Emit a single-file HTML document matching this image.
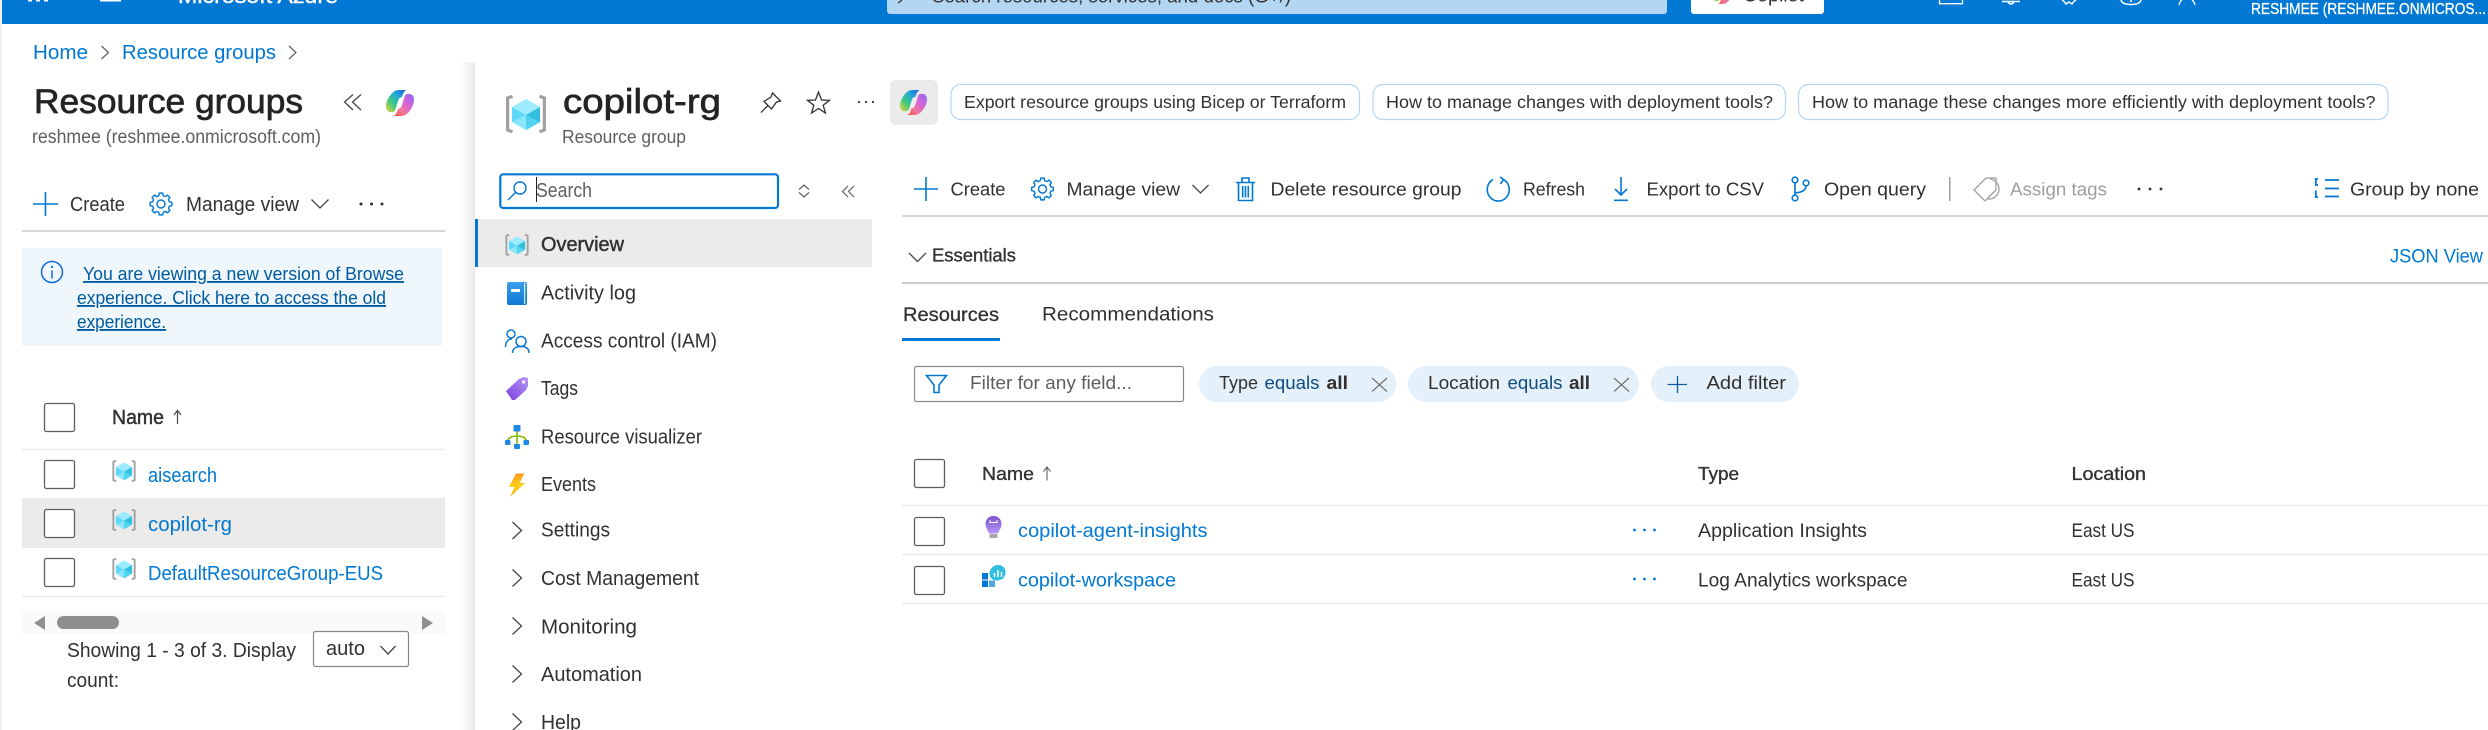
<!DOCTYPE html>
<html lang="en">
<head>
<meta charset="utf-8">
<title>copilot-rg - Microsoft Azure</title>
<style>
html,body{margin:0;padding:0;background:#fff;width:2488px;height:730px;overflow:hidden}
svg{display:block}
text{font-family:"Liberation Sans",sans-serif;fill:#323130;white-space:pre}
.b{font-size:20px}
.s{font-size:18.5px}
.l{fill:#0078d4}
.sb{stroke:#323130;stroke-width:.45px}
.g{fill:#605e5c}
.w{fill:#fff}
.i{fill:none;stroke:#0078d4;stroke-width:1.6}
.d{fill:none;stroke:#484644;stroke-width:1.3}
.c{fill:#fff;stroke:#605e5c;stroke-width:1.3}
.hl{stroke:#ccc;stroke-width:1.5}
.rl{stroke:#edebe9;stroke-width:1.5}
</style>
</head>
<body>
<svg width="2488" height="730" viewBox="0 0 2488 730" xmlns="http://www.w3.org/2000/svg">
<defs>
<linearGradient id="shadow" x1="0" x2="1" y1="0" y2="0"><stop offset="0" stop-color="#fff"/><stop offset="1" stop-color="#ebebeb"/></linearGradient>
<linearGradient id="cpL" x1="1" y1="0" x2="0" y2="1"><stop offset="0" stop-color="#1a5fe0"/><stop offset=".35" stop-color="#25a7d8"/><stop offset=".65" stop-color="#3fc97e"/><stop offset="1" stop-color="#f0d13a"/></linearGradient>
<linearGradient id="cpR" x1="0" y1="1" x2="1" y2="0"><stop offset="0" stop-color="#f2562a"/><stop offset=".3" stop-color="#f4779a"/><stop offset=".65" stop-color="#d063dc"/><stop offset="1" stop-color="#8a6cf0"/></linearGradient>
<linearGradient id="book" x1="0" x2="0" y1="0" y2="1"><stop offset="0" stop-color="#3aa0ea"/><stop offset="1" stop-color="#0f78d2"/></linearGradient>
<linearGradient id="bolt" x1="0" x2="0" y1="0" y2="1"><stop offset="0" stop-color="#ff9a1f"/><stop offset=".55" stop-color="#fcd116"/><stop offset="1" stop-color="#ffa21f"/></linearGradient>
<linearGradient id="tag" x1="0" x2="1" y1="1" y2="0"><stop offset="0" stop-color="#7a3fdc"/><stop offset="1" stop-color="#b796f9"/></linearGradient>
<linearGradient id="bulb" x1="0" x2="0" y1="0" y2="1"><stop offset="0" stop-color="#7a55c8"/><stop offset="1" stop-color="#b796f9"/></linearGradient>

<symbol id="copilot" viewBox="0 0 28 26">
<path fill="url(#cpL)" d="M8 1.5C9.500 .4 11 0 13 0H20.500C18.500 .8 17.500 2.500 16.500 5.500L16 7C13.500 7.500 12.500 9 12 11L9.500 19C9 21 8 22 6 22H4.500C1.500 22 0 19.500 0 16.500C0 11 3.500 5 8 1.500Z"/>
<path fill="url(#cpR)" d="M20 24.500C18.500 25.600 17 26 15 26H7.500C9.500 25.200 10.500 23.500 11.500 20.500L12 19C14.500 18.500 15.500 17 16 15L18.500 7C19 5 20 4 22 4H23.500C26.500 4 28 6.500 28 9.500C28 15 24.500 21 20 24.500Z"/>
</symbol>

<symbol id="rg" viewBox="0 0 40 38">
<path d="M6.5 1.2L1.6 3V35L6.5 36.8" fill="none" stroke="#a0a1a2" stroke-width="3.2"/>
<path d="M33.5 1.2L38.4 3V35L33.5 36.8" fill="none" stroke="#a0a1a2" stroke-width="3.2"/>
<polygon points="20,4 34,12 20,20 6,12" fill="#9cebff"/>
<polygon points="6,12 20,20 20,35 6,27" fill="#5dd8f8"/>
<polygon points="34,12 34,27 20,35 20,20" fill="#32bedd"/>
<polygon points="6,27 20,20 20,35" fill="#8be6fc"/>
<polygon points="34,27 20,20 20,35" fill="#50d4f2"/>
</symbol>

<g id="tooth"><path d="M-2.08 -8.34L-1.72 -10.87H1.72L2.08 -8.34A8.6 8.6 0 0 1 4.43 -7.37" fill="none"/></g>
<symbol id="gear" viewBox="0 0 24 24" overflow="visible">
<g transform="translate(12 12)" fill="none" stroke="#0078d4" stroke-width="1.4" stroke-linejoin="round">
<use href="#tooth"/><use href="#tooth" transform="rotate(45)"/><use href="#tooth" transform="rotate(90)"/><use href="#tooth" transform="rotate(135)"/><use href="#tooth" transform="rotate(180)"/><use href="#tooth" transform="rotate(225)"/><use href="#tooth" transform="rotate(270)"/><use href="#tooth" transform="rotate(315)"/>
<circle r="4"/>
</g>
</symbol>
</defs>

<!-- page -->
<rect width="2488" height="730" fill="#fff"/>
<rect x="0" y="0" width="2" height="730" fill="#f2f2f2"/>
<rect x="459" y="62" width="16" height="668" fill="url(#shadow)"/>

<!-- top bar -->
<rect x="2" y="0" width="2486" height="24" fill="#0078d4"/>
<rect x="100" y="0" width="21" height="1.5" fill="#fff"/>
<rect x="28" y="0" width="4" height="1.5" fill="#fff"/><rect x="36" y="0" width="4" height="1.5" fill="#fff"/><rect x="44" y="0" width="4" height="1.5" fill="#fff"/>
<text class="w" style="stroke:#fff;stroke-width:.45px" x="178" y="3" font-size="20" textLength="160" lengthAdjust="spacingAndGlyphs">Microsoft Azure</text>
<rect x="887" y="-6" width="780" height="20" rx="3" fill="#b3d7f2"/>
<path d="M902 0L898 3" stroke="#323130" stroke-width="1.3" fill="none"/>
<text x="932" y="2.500" font-size="18" textLength="359" lengthAdjust="spacingAndGlyphs">Search resources, services, and docs (G+/)</text>
<rect x="1691" y="-6" width="133" height="20" rx="3" fill="#fff"/>
<use href="#copilot" x="1713" y="-14" width="19" height="18"/>
<text x="1743" y="1.500" font-size="18" textLength="61" lengthAdjust="spacingAndGlyphs">Copilot</text>
<path d="M1939.5 0V3.7H1962.5V0" fill="none" stroke="#fff" stroke-width="1.3"/>
<path d="M2002 1.5H2020M2008 2Q2011 6 2014 2" fill="none" stroke="#fff" stroke-width="1.5"/>
<path d="M2062 0Q2064 1 2066 4L2069 2L2072 4Q2074 1 2076 0" fill="none" stroke="#fff" stroke-width="1.5"/>
<path d="M2121 0Q2122 4.5 2131 4.5T2141 0M2131 0V2" fill="none" stroke="#fff" stroke-width="1.5"/>
<path d="M2179 5Q2180 1 2182 0M2195 5Q2194 1 2192 0" fill="none" stroke="#fff" stroke-width="1.3"/>
<text class="w" style="stroke:#fff;stroke-width:.3px" x="2251" y="14" font-size="15.5" textLength="235" lengthAdjust="spacingAndGlyphs">RESHMEE (RESHMEE.ONMICROS...</text>

<!-- breadcrumb -->
<text class="l" x="33" y="59" font-size="20.5" textLength="55" lengthAdjust="spacingAndGlyphs">Home</text>
<path d="M101.500 46L108.500 52.500L101.500 59" fill="none" stroke="#605e5c" stroke-width="1.2"/>
<text class="l" x="122" y="59" font-size="20.500" textLength="154" lengthAdjust="spacingAndGlyphs">Resource groups</text>
<path d="M289 46L296 52.500L289 59" fill="none" stroke="#605e5c" stroke-width="1.200"/>

<!-- left header -->
<text x="34" y="113" font-size="34" textLength="269" lengthAdjust="spacingAndGlyphs" style="fill:#242424;stroke:#242424;stroke-width:.7px">Resource groups</text>
<text class="g" x="32" y="143" font-size="19" textLength="289" lengthAdjust="spacingAndGlyphs">reshmee (reshmee.onmicrosoft.com)</text>
<path d="M353 94.500L344.500 102L353 110M361 94.500L352.500 102L361 110" class="d"/>
<use href="#copilot" x="386" y="90" width="28" height="26"/>

<!-- left toolbar -->
<path d="M45.500 192V216M33 204H58" class="i"/>
<text class="b" x="70" y="211" textLength="55" lengthAdjust="spacingAndGlyphs">Create</text>
<use href="#gear" x="149" y="192" width="24" height="24"/>
<text class="b" x="186" y="211" textLength="113" lengthAdjust="spacingAndGlyphs">Manage view</text>
<path d="M311.500 199.500L320 208L328.500 199.500" class="d"/>
<circle cx="361" cy="204" r="1.500" fill="#323130"/><circle cx="371.500" cy="204" r="1.500" fill="#323130"/><circle cx="382" cy="204" r="1.500" fill="#323130"/>
<line class="hl" x1="22" y1="231" x2="445" y2="231"/>

<!-- banner -->
<rect x="22" y="248" width="420" height="98" fill="#eff6fc"/>
<circle cx="52" cy="272" r="10.500" fill="none" stroke="#0f6cd8" stroke-width="1.500"/>
<path d="M52 270.500V278.500" stroke="#0f6cd8" stroke-width="1.500"/><circle cx="52" cy="267" r="1.100" fill="#0f6cd8"/>
<text style="fill:#005a9e" x="83" y="280" font-size="18.500" text-decoration="underline" textLength="321" lengthAdjust="spacingAndGlyphs">You are viewing a new version of Browse</text>
<text style="fill:#005a9e" x="77" y="304" font-size="18.500" text-decoration="underline" textLength="309" lengthAdjust="spacingAndGlyphs">experience. Click here to access the old</text>
<text style="fill:#005a9e" x="77" y="328" font-size="18.500" text-decoration="underline" textLength="89" lengthAdjust="spacingAndGlyphs">experience.</text>

<!-- left table -->
<rect class="c" x="44.500" y="403.500" width="30" height="28" rx="2"/>
<text class="b sb" x="112" y="424" textLength="52" lengthAdjust="spacingAndGlyphs">Name</text>
<path d="M177.500 424V411M174 415L177.500 410.500L181 415" fill="none" stroke="#484644" stroke-width="1.200"/>
<line class="rl" x1="22" y1="449.500" x2="445" y2="449.500"/>
<rect class="c" x="44.500" y="460.500" width="30" height="28" rx="2"/>
<use href="#rg" x="112" y="460" width="24" height="22"/>
<text class="b l" x="148" y="482" textLength="69" lengthAdjust="spacingAndGlyphs">aisearch</text>
<rect x="22" y="498" width="423" height="50" fill="#edebe9"/>
<rect class="c" x="44.500" y="509.500" width="30" height="28" rx="2"/>
<use href="#rg" x="112" y="509" width="24" height="22"/>
<text class="b l" x="148" y="531" textLength="84" lengthAdjust="spacingAndGlyphs">copilot-rg</text>
<rect class="c" x="44.500" y="558.500" width="30" height="28" rx="2"/>
<use href="#rg" x="112" y="558" width="24" height="22"/>
<text class="b l" x="148" y="580" textLength="235" lengthAdjust="spacingAndGlyphs">DefaultResourceGroup-EUS</text>
<line class="rl" x1="22" y1="596.500" x2="445" y2="596.500"/>

<!-- scrollbar -->
<rect x="22" y="611" width="423" height="23" fill="#fafafa"/>
<polygon points="45,616 34,623 45,630" fill="#8f8f8f"/>
<rect x="57" y="616" width="62" height="13" rx="6.500" fill="#8f8f8f"/>
<polygon points="422,616 433,623 422,630" fill="#8f8f8f"/>
<text class="b" x="67" y="657" textLength="229" lengthAdjust="spacingAndGlyphs">Showing 1 - 3 of 3. Display</text>
<text class="b" x="67" y="687" textLength="52" lengthAdjust="spacingAndGlyphs">count:</text>
<rect x="313.500" y="631.500" width="95" height="35" rx="2" fill="#fff" stroke="#8a8886" stroke-width="1.200"/>
<text class="b" x="326" y="655" textLength="39" lengthAdjust="spacingAndGlyphs">auto</text>
<path d="M380.500 646L388 654L395.500 646" class="d"/>

<!-- resource header -->
<use href="#rg" x="506" y="95" width="40" height="38"/>
<text x="563" y="113" font-size="34" textLength="158" lengthAdjust="spacingAndGlyphs" style="fill:#242424;stroke:#242424;stroke-width:.7px">copilot-rg</text>
<text class="g" x="562" y="143" font-size="18" textLength="124" lengthAdjust="spacingAndGlyphs">Resource group</text>
<path d="M761 112.500L768 105.500M772.500 93L780.500 101L776.500 102L771.500 109L764 101.500L771 97Z" fill="none" stroke="#323130" stroke-width="1.300"/>
<polygon points="818.500,92 821.500,100 829.500,100.300 823.200,105.300 825.400,113 818.500,108.500 811.600,113 813.800,105.300 807.500,100.300 815.500,100" fill="none" stroke="#323130" stroke-width="1.300"/>
<circle cx="859" cy="102" r="1.100" fill="#323130"/><circle cx="866" cy="102" r="1.100" fill="#323130"/><circle cx="873" cy="102" r="1.100" fill="#323130"/>
<rect x="890" y="80" width="48" height="45" rx="6" fill="#ebebeb"/>
<use href="#copilot" x="899" y="90" width="29" height="25"/>

<!-- chips -->
<rect x="951" y="84.500" width="408.500" height="35" rx="10" fill="#fff" stroke="#b4d6f5" stroke-width="1.200"/>
<text x="964" y="108" font-size="17.500" textLength="382" lengthAdjust="spacingAndGlyphs">Export resource groups using Bicep or Terraform</text>
<rect x="1373" y="84.500" width="412.500" height="35" rx="10" fill="#fff" stroke="#b4d6f5" stroke-width="1.200"/>
<text x="1386" y="108" font-size="17.500" textLength="387" lengthAdjust="spacingAndGlyphs">How to manage changes with deployment tools?</text>
<rect x="1798.500" y="84.500" width="589.500" height="35" rx="10" fill="#fff" stroke="#b4d6f5" stroke-width="1.200"/>
<text x="1812" y="108" font-size="17.500" textLength="563.500" lengthAdjust="spacingAndGlyphs">How to manage these changes more efficiently with deployment tools?</text>

<!-- search -->
<rect x="500.300" y="174.300" width="277.700" height="33.700" rx="3" fill="#fff" stroke="#0078d4" stroke-width="2.200"/>
<circle cx="520" cy="188" r="6" fill="none" stroke="#0078d4" stroke-width="1.400"/>
<path d="M515.500 192.500L508 200" stroke="#0078d4" stroke-width="1.400"/>
<text class="g" x="536" y="197" font-size="20" textLength="56" lengthAdjust="spacingAndGlyphs">Search</text>
<rect x="536" y="177" width="1" height="25" fill="#222"/>
<path d="M799 189.500L804 185L809 189.500M799 192.500L804 197L809 192.500" fill="none" stroke="#605e5c" stroke-width="1.200"/>
<path d="M848 186L842.500 191.500L848 197M854 186L848.500 191.500L854 197" fill="none" stroke="#605e5c" stroke-width="1.200"/>

<!-- nav -->
<rect x="475" y="219" width="397" height="48" fill="#edebe9"/>
<rect x="475" y="219" width="3" height="48" fill="#0078d4"/>
<use href="#rg" x="505" y="234" width="24" height="22"/>
<text class="b sb" x="541" y="251" textLength="83" lengthAdjust="spacingAndGlyphs">Overview</text>

<rect x="507" y="282" width="20" height="23" rx="2" fill="url(#book)"/>
<rect x="524" y="283" width="1.200" height="21" fill="#d5ebfb"/>
<rect x="511" y="289" width="9" height="3" fill="#fff"/>
<text class="b" x="541" y="299.500" textLength="95" lengthAdjust="spacingAndGlyphs">Activity log</text>

<g fill="none" stroke="#0f78d4" stroke-width="1.500">
<circle cx="511" cy="334" r="4"/><path d="M505.500 347C505.500 342 508 339 512 339"/>
<circle cx="521" cy="341.500" r="5"/><path d="M512.500 353C512.500 348.500 516 346.500 521 346.500S529 348.500 529 353"/>
</g>
<text class="b" x="541" y="347.500" textLength="176" lengthAdjust="spacingAndGlyphs">Access control (IAM)</text>

<polygon points="506,391 519,379 524,377 528,378 528,386 526,390 515,400 512,400" fill="url(#tag)"/>
<circle cx="523.500" cy="382" r="1.600" fill="#fff"/>
<text class="b" x="541" y="395" textLength="37" lengthAdjust="spacingAndGlyphs">Tags</text>

<path d="M517 431V444M517 436Q509 436 507.500 441M517 436Q525 436 526.500 441" fill="none" stroke="#7fba00" stroke-width="1.600"/>
<rect x="513.500" y="425" width="7" height="6.500" rx="1" fill="#1e88e5"/>
<rect x="505" y="440" width="5.500" height="5" rx="1" fill="#1e88e5"/>
<rect x="523.500" y="440" width="5.500" height="5" rx="1" fill="#1e88e5"/>
<rect x="514" y="444" width="6" height="5" rx="1" fill="#1e88e5"/>
<text class="b" x="541" y="443.500" textLength="161" lengthAdjust="spacingAndGlyphs">Resource visualizer</text>

<polygon points="516,473.500 524.500,473.500 519.500,483 525,483 510,497 514.500,487 509,487" fill="url(#bolt)"/>
<text class="b" x="541" y="491" textLength="55" lengthAdjust="spacingAndGlyphs">Events</text>

<path d="M512.500 522L521.500 530.500L512.500 539" class="d"/>
<text class="b" x="541" y="536.500" textLength="69" lengthAdjust="spacingAndGlyphs">Settings</text>
<path d="M512.500 569.500L521.500 578L512.500 586.500" class="d"/>
<text class="b" x="541" y="585" textLength="158" lengthAdjust="spacingAndGlyphs">Cost Management</text>
<path d="M512.500 617.500L521.500 626L512.500 634.500" class="d"/>
<text class="b" x="541" y="633.500" textLength="96" lengthAdjust="spacingAndGlyphs">Monitoring</text>
<path d="M512.500 665.500L521.500 674L512.500 682.500" class="d"/>
<text class="b" x="541" y="681" textLength="101" lengthAdjust="spacingAndGlyphs">Automation</text>
<path d="M512.500 713.500L521.500 722L512.500 730.500" class="d"/>
<text class="b" x="541" y="729" textLength="40" lengthAdjust="spacingAndGlyphs">Help</text>

<!-- main toolbar -->
<path d="M926 177V201M914 189H938" class="i"/>
<text class="s" x="950.500" y="195.500" textLength="55" lengthAdjust="spacingAndGlyphs">Create</text>
<use href="#gear" x="1030" y="177" width="25" height="24"/>
<text class="s" x="1066.500" y="195.500" textLength="113.500" lengthAdjust="spacingAndGlyphs">Manage view</text>
<path d="M1192.500 185L1200.500 193L1208.500 185" class="d"/>
<path d="M1236 182.500H1255M1242 182V178H1249V182M1238.500 183V200.500H1252.500V183M1242.700 186V197.500M1245.500 186V197.500M1248.300 186V197.500" class="i"/>
<text class="s" x="1270.500" y="195.500" textLength="191" lengthAdjust="spacingAndGlyphs">Delete resource group</text>
<path d="M1493 179.500A11 11.500 0 1 0 1503.500 179.500M1500 177L1503.500 179.500L1500.500 184" class="i"/>
<text class="s" x="1523" y="195.500" textLength="62" lengthAdjust="spacingAndGlyphs">Refresh</text>
<path d="M1621 177V195M1615 189L1621 195L1627 189M1614 200.300H1628" class="i"/>
<text class="s" x="1646.500" y="195.500" textLength="117.500" lengthAdjust="spacingAndGlyphs">Export to CSV</text>
<g class="i"><circle cx="1795" cy="180" r="2.800"/><circle cx="1806" cy="183" r="2.800"/><circle cx="1795" cy="198" r="2.800"/><path d="M1795 183V195M1806 186Q1806 192 1795 193"/></g>
<text class="s" x="1824" y="195.500" textLength="102" lengthAdjust="spacingAndGlyphs">Open query</text>
<rect x="1949" y="177" width="1.500" height="24" fill="#a19f9d"/>
<path d="M1974 190L1986 178H1996V190L1985 201ZM1990 179A10 10 0 0 1 1988 199" fill="none" stroke="#a19f9d" stroke-width="1.300"/>
<text class="s" x="2010" y="195.500" textLength="97" lengthAdjust="spacingAndGlyphs" style="fill:#a19f9d">Assign tags</text>
<circle cx="2139" cy="189" r="1.400" fill="#323130"/><circle cx="2150" cy="189" r="1.400" fill="#323130"/><circle cx="2161" cy="189" r="1.400" fill="#323130"/>
<path d="M2325 180H2339M2325 188.500H2339M2325 196.500H2339M2318 179H2315.800V185H2318M2315.800 190.500V197H2318" class="i" style="stroke-width:1.800"/>
<text class="s" x="2350" y="195.500" textLength="129" lengthAdjust="spacingAndGlyphs">Group by none</text>
<line class="hl" x1="902" y1="216" x2="2488" y2="216"/>

<!-- essentials -->
<path d="M909 253L917.500 261.500L926 253" class="d"/>
<text x="932" y="261.500" font-size="18.500" class="sb" textLength="84" lengthAdjust="spacingAndGlyphs" style="stroke-width:.35px">Essentials</text>
<text class="l" x="2390" y="262.500" font-size="19" textLength="93" lengthAdjust="spacingAndGlyphs">JSON View</text>
<rect x="902" y="282" width="1586" height="2" fill="#ccc"/>

<!-- tabs -->
<text x="903" y="321" font-size="19" class="sb" textLength="96" lengthAdjust="spacingAndGlyphs" style="stroke-width:.3px">Resources</text>
<text x="1042" y="320.500" font-size="19" textLength="172" lengthAdjust="spacingAndGlyphs">Recommendations</text>
<rect x="902" y="338" width="98" height="3" fill="#0078d4"/>

<!-- filters -->
<rect x="914.500" y="366.500" width="269" height="35" rx="2" fill="#fff" stroke="#8a8886" stroke-width="1.200"/>
<path d="M926.500 375.500H946.500L939 385V392.500H934V385Z" class="i"/>
<text class="g" x="970" y="389" font-size="18.500" textLength="162" lengthAdjust="spacingAndGlyphs">Filter for any field...</text>
<rect x="1199" y="366" width="197" height="36" rx="18" fill="#e4f0fa"/>
<text x="1219" y="389" font-size="18.500" textLength="39" lengthAdjust="spacingAndGlyphs">Type</text>
<text x="1264.500" y="389" font-size="18.500" textLength="55" lengthAdjust="spacingAndGlyphs" style="fill:#0f4c81">equals</text>
<text x="1326.500" y="389" font-size="18.500" font-weight="bold" textLength="21.500" lengthAdjust="spacingAndGlyphs">all</text>
<path d="M1372 378L1387 391.500M1387 378L1372 391.500" fill="none" stroke="#605e5c" stroke-width="1.100"/>
<rect x="1408" y="366" width="231" height="36" rx="18" fill="#e4f0fa"/>
<text x="1428" y="389" font-size="18.500" textLength="72" lengthAdjust="spacingAndGlyphs">Location</text>
<text x="1507.500" y="389" font-size="18.500" textLength="55" lengthAdjust="spacingAndGlyphs" style="fill:#0f4c81">equals</text>
<text x="1569" y="389" font-size="18.500" font-weight="bold" textLength="21" lengthAdjust="spacingAndGlyphs">all</text>
<path d="M1614 378L1629 391.500M1629 378L1614 391.500" fill="none" stroke="#605e5c" stroke-width="1.100"/>
<rect x="1651" y="366" width="148" height="36" rx="18" fill="#e4f0fa"/>
<path d="M1677.500 376V393M1667.500 384.500H1687" fill="none" stroke="#0f5c9e" stroke-width="1.300"/>
<text x="1706.500" y="389" font-size="18.500" textLength="79.500" lengthAdjust="spacingAndGlyphs">Add filter</text>

<!-- main table -->
<rect class="c" x="914.500" y="459.500" width="30" height="28" rx="2"/>
<text x="982" y="480" font-size="18.500" class="sb" textLength="52" lengthAdjust="spacingAndGlyphs" style="stroke-width:.35px">Name</text>
<path d="M1047 480.500V467.500M1043.500 471.500L1047 467L1050.500 471.500" fill="none" stroke="#605e5c" stroke-width="1.100"/>
<text x="1698" y="480" font-size="18.500" class="sb" textLength="41" lengthAdjust="spacingAndGlyphs" style="stroke-width:.35px">Type</text>
<text x="2071.500" y="480" font-size="18.500" class="sb" textLength="74.500" lengthAdjust="spacingAndGlyphs" style="stroke-width:.35px">Location</text>
<line class="rl" x1="902" y1="505.500" x2="2488" y2="505.500"/>

<rect class="c" x="914.500" y="517.500" width="30" height="28" rx="2"/>
<path d="M993.500 516C988.500 516 985.500 519.500 985.500 524C985.500 527.500 987.500 529.500 989 533.500H998C999.500 529.500 1001.500 527.500 1001.500 524C1001.500 519.500 998.500 516 993.500 516Z" fill="url(#bulb)"/>
<path d="M990 520V522.500H997V520" fill="none" stroke="#fff" stroke-width="1"/>
<rect x="989.500" y="534" width="8" height="4" rx="1" fill="#a6a6a6"/>
<text class="l" x="1018" y="537" font-size="19" textLength="189.500" lengthAdjust="spacingAndGlyphs">copilot-agent-insights</text>
<circle cx="1634.500" cy="530" r="1.400" fill="#0078d4"/><circle cx="1644.500" cy="530" r="1.400" fill="#0078d4"/><circle cx="1654.500" cy="530" r="1.400" fill="#0078d4"/>
<text x="1698" y="537" font-size="19" textLength="169" lengthAdjust="spacingAndGlyphs">Application Insights</text>
<text x="2071.500" y="537" font-size="19.500" textLength="63" lengthAdjust="spacingAndGlyphs">East US</text>
<line class="rl" x1="902" y1="554.500" x2="2488" y2="554.500"/>

<rect class="c" x="914.500" y="566.500" width="30" height="28" rx="2"/>
<rect x="982" y="573" width="6" height="6.500" fill="#0078d4"/>
<rect x="982" y="580.500" width="6" height="6.500" fill="#0078d4"/>
<rect x="989" y="580.500" width="6" height="6.500" fill="#50a8e8"/>
<path d="M998 565C1002.500 565 1005.500 568 1005.500 572.500C1005.500 577 1002 580.500 997 580.500C992 580.500 989.500 577.500 989.500 573C989.500 569 993.500 565 998 565Z" fill="#2dc0e0"/>
<path d="M994.500 577V573M998 577V570M1001.500 577V572" stroke="#fff" stroke-width="1.500" fill="none"/>
<text class="l" x="1018" y="586.500" font-size="19" textLength="158" lengthAdjust="spacingAndGlyphs">copilot-workspace</text>
<circle cx="1634.500" cy="579" r="1.400" fill="#0078d4"/><circle cx="1644.500" cy="579" r="1.400" fill="#0078d4"/><circle cx="1654.500" cy="579" r="1.400" fill="#0078d4"/>
<text x="1698" y="586.500" font-size="19" textLength="209.500" lengthAdjust="spacingAndGlyphs">Log Analytics workspace</text>
<text x="2071.500" y="586.500" font-size="19.500" textLength="63" lengthAdjust="spacingAndGlyphs">East US</text>
<line class="rl" x1="902" y1="603.500" x2="2488" y2="603.500"/>
</svg>
</body>
</html>
